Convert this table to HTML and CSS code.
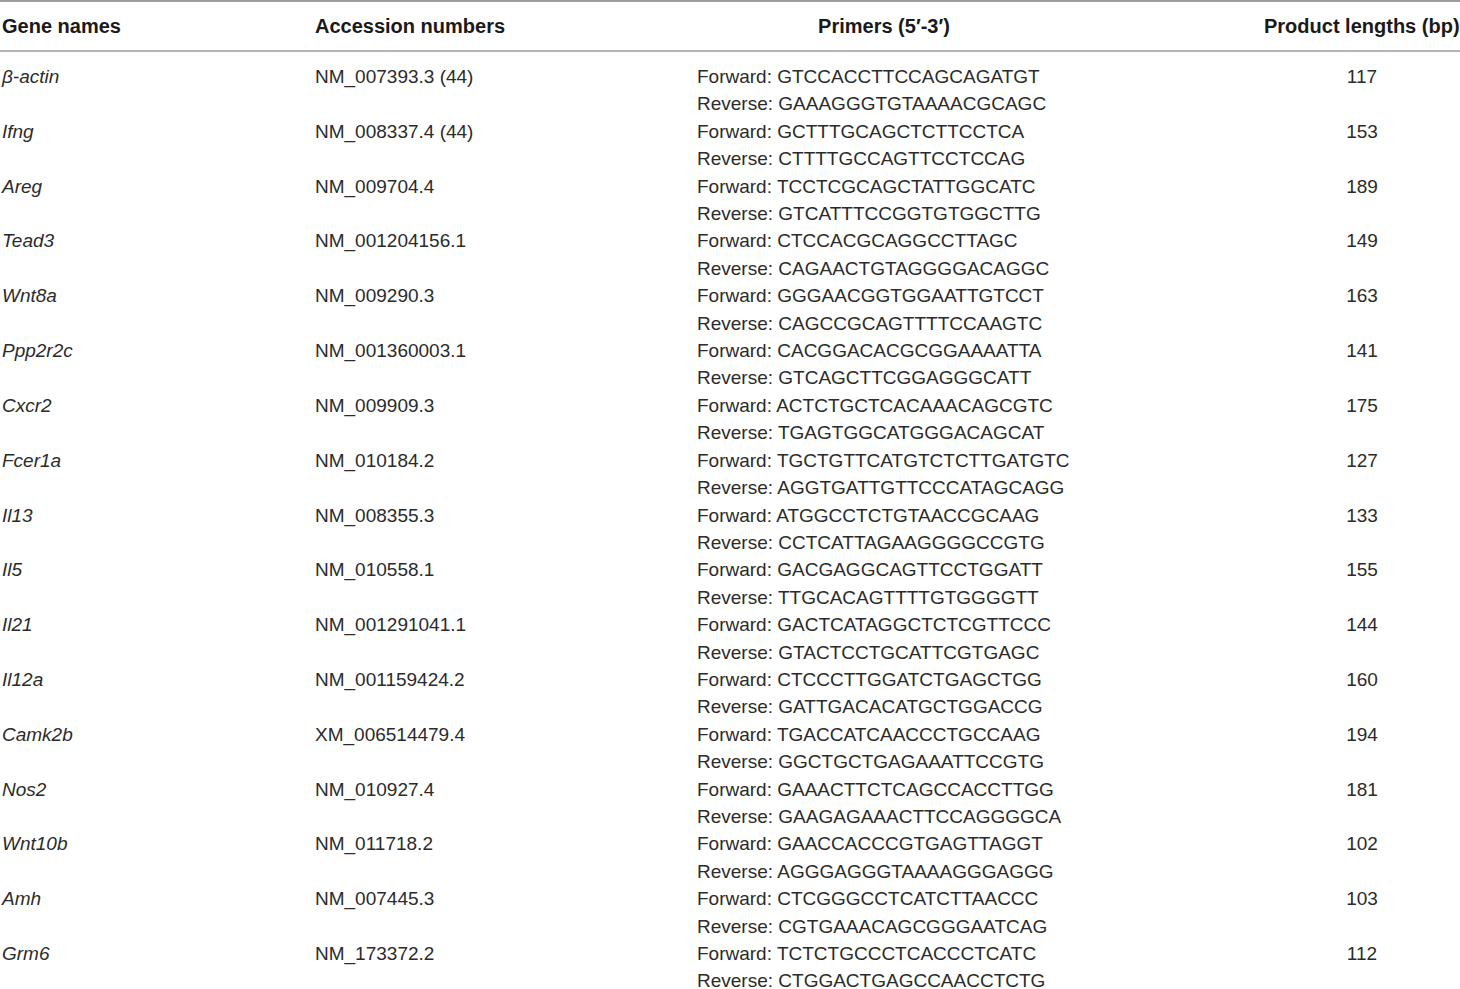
FILE: index.html
```html
<!DOCTYPE html>
<html lang="en">
<head>
<meta charset="utf-8">
<title>Primer table</title>
<link rel="stylesheet" href="styles.css">
</head>
<body>
<table class="primers">
  <colgroup>
    <col class="c-gene">
    <col class="c-acc">
    <col class="c-primer">
    <col class="c-len">
  </colgroup>
  <thead>
    <tr>
      <th class="h-gene">Gene names</th>
      <th class="h-acc">Accession numbers</th>
      <th class="h-primer">Primers (5′-3′)</th>
      <th class="h-len">Product lengths (bp)</th>
    </tr>
  </thead>
  <tbody>
    <tr class="first"><td class="gene">β-actin</td><td class="acc">NM_007393.3 (44)</td><td class="primer"><div>Forward: GTCCACCTTCCAGCAGATGT</div><div>Reverse: GAAAGGGTGTAAAACGCAGC</div></td><td class="len">117</td></tr>
    <tr><td class="gene">Ifng</td><td class="acc">NM_008337.4 (44)</td><td class="primer"><div>Forward: GCTTTGCAGCTCTTCCTCA</div><div>Reverse: CTTTTGCCAGTTCCTCCAG</div></td><td class="len">153</td></tr>
    <tr><td class="gene">Areg</td><td class="acc">NM_009704.4</td><td class="primer"><div>Forward: TCCTCGCAGCTATTGGCATC</div><div>Reverse: GTCATTTCCGGTGTGGCTTG</div></td><td class="len">189</td></tr>
    <tr><td class="gene">Tead3</td><td class="acc">NM_001204156.1</td><td class="primer"><div>Forward: CTCCACGCAGGCCTTAGC</div><div>Reverse: CAGAACTGTAGGGGACAGGC</div></td><td class="len">149</td></tr>
    <tr><td class="gene">Wnt8a</td><td class="acc">NM_009290.3</td><td class="primer"><div>Forward: GGGAACGGTGGAATTGTCCT</div><div>Reverse: CAGCCGCAGTTTTCCAAGTC</div></td><td class="len">163</td></tr>
    <tr><td class="gene">Ppp2r2c</td><td class="acc">NM_001360003.1</td><td class="primer"><div>Forward: CACGGACACGCGGAAAATTA</div><div>Reverse: GTCAGCTTCGGAGGGCATT</div></td><td class="len">141</td></tr>
    <tr><td class="gene">Cxcr2</td><td class="acc">NM_009909.3</td><td class="primer"><div>Forward: ACTCTGCTCACAAACAGCGTC</div><div>Reverse: TGAGTGGCATGGGACAGCAT</div></td><td class="len">175</td></tr>
    <tr><td class="gene">Fcer1a</td><td class="acc">NM_010184.2</td><td class="primer"><div>Forward: TGCTGTTCATGTCTCTTGATGTC</div><div>Reverse: AGGTGATTGTTCCCATAGCAGG</div></td><td class="len">127</td></tr>
    <tr><td class="gene">Il13</td><td class="acc">NM_008355.3</td><td class="primer"><div>Forward: ATGGCCTCTGTAACCGCAAG</div><div>Reverse: CCTCATTAGAAGGGGCCGTG</div></td><td class="len">133</td></tr>
    <tr><td class="gene">Il5</td><td class="acc">NM_010558.1</td><td class="primer"><div>Forward: GACGAGGCAGTTCCTGGATT</div><div>Reverse: TTGCACAGTTTTGTGGGGTT</div></td><td class="len">155</td></tr>
    <tr><td class="gene">Il21</td><td class="acc">NM_001291041.1</td><td class="primer"><div>Forward: GACTCATAGGCTCTCGTTCCC</div><div>Reverse: GTACTCCTGCATTCGTGAGC</div></td><td class="len">144</td></tr>
    <tr><td class="gene">Il12a</td><td class="acc">NM_001159424.2</td><td class="primer"><div>Forward: CTCCCTTGGATCTGAGCTGG</div><div>Reverse: GATTGACACATGCTGGACCG</div></td><td class="len">160</td></tr>
    <tr><td class="gene">Camk2b</td><td class="acc">XM_006514479.4</td><td class="primer"><div>Forward: TGACCATCAACCCTGCCAAG</div><div>Reverse: GGCTGCTGAGAAATTCCGTG</div></td><td class="len">194</td></tr>
    <tr><td class="gene">Nos2</td><td class="acc">NM_010927.4</td><td class="primer"><div>Forward: GAAACTTCTCAGCCACCTTGG</div><div>Reverse: GAAGAGAAACTTCCAGGGGCA</div></td><td class="len">181</td></tr>
    <tr><td class="gene">Wnt10b</td><td class="acc">NM_011718.2</td><td class="primer"><div>Forward: GAACCACCCGTGAGTTAGGT</div><div>Reverse: AGGGAGGGTAAAAGGGAGGG</div></td><td class="len">102</td></tr>
    <tr><td class="gene">Amh</td><td class="acc">NM_007445.3</td><td class="primer"><div>Forward: CTCGGGCCTCATCTTAACCC</div><div>Reverse: CGTGAAACAGCGGGAATCAG</div></td><td class="len">103</td></tr>
    <tr><td class="gene">Grm6</td><td class="acc">NM_173372.2</td><td class="primer"><div>Forward: TCTCTGCCCTCACCCTCATC</div><div>Reverse: CTGGACTGAGCCAACCTCTG</div></td><td class="len">112</td></tr>
  </tbody>
</table>
</body>
</html>
```
FILE: styles.css
```css
html, body {
  margin: 0;
  padding: 0;
  background: #ffffff;
}

body {
  font-family: "Liberation Sans", Arial, Helvetica, sans-serif;
  color: #2b2b2b;
}

.primers {
  width: 1460px;
  border-collapse: collapse;
  table-layout: fixed;
  border-top: 2px solid #9d9d9d;
}

.c-gene { width: 315px; }
.c-acc { width: 189px; }
.c-primer { width: 760px; }
.c-len { width: 196px; }

.primers th {
  font-weight: bold;
  font-size: 20px;
  height: 48px;
  padding: 0;
  vertical-align: middle;
  white-space: nowrap;
  border-bottom: 2px solid #b4b4b4;
  color: #1a1a1a;
}

.h-gene { text-align: left; padding-left: 2px !important; }
.h-acc { text-align: left; }
.h-primer { text-align: center; }
.h-len { text-align: right; padding-right: 2px !important; }

.primers td {
  font-size: 19px;
  line-height: 27.4px;
  padding: 0;
  vertical-align: top;
  white-space: nowrap;
}

.primers tr.first td {
  padding-top: 11px;
}

.gene {
  font-style: italic;
  padding-left: 2px !important;
}

.primer {
  padding-left: 193px !important;
}

.len {
  text-align: center;
}
```
